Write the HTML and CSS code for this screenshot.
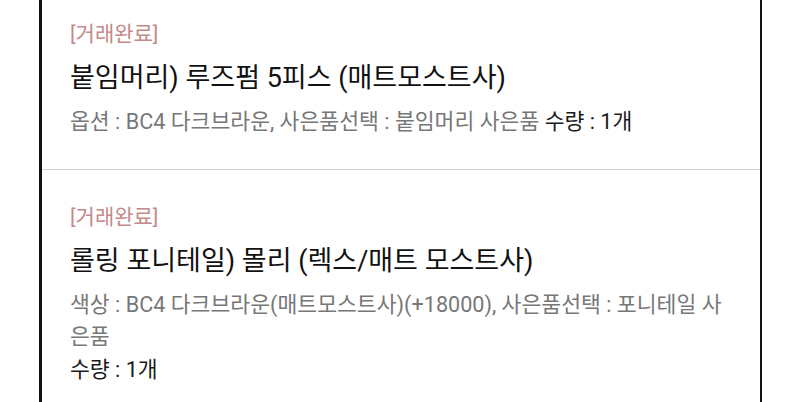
FILE: index.html
```html
<!DOCTYPE html>
<html lang="ko">
<head>
<meta charset="utf-8">
<link rel="stylesheet" href="styles.css">
</head>
<body>
<div class="list">
  <div class="item">
    <div class="status">[거래완료]</div>
    <div class="title">붙임머리) 루즈펌 5피스 (매트모스트사)</div>
    <div class="info"><span class="opt">옵션 : BC4 다크브라운, 사은품선택 : 붙임머리 사은품</span> <span class="qty">수량 : 1개</span></div>
  </div>
  <div class="item">
    <div class="status">[거래완료]</div>
    <div class="title">롤링 포니테일) 몰리 (렉스/매트 모스트사)</div>
    <div class="info"><span class="opt">색상 : BC4 다크브라운(매트모스트사)(+18000), 사은품선택 : 포니테일 사은품</span> <span class="qty">수량 : 1개</span></div>
  </div>
</div>
</body>
</html>
```

FILE: styles.css
```css
html, body {
  margin: 0;
  padding: 0;
  background: #fff;
  height: 402px;
  overflow: hidden;
}
body {
  font-family: "Roboto", "Noto Sans CJK KR", sans-serif;
}
.list {
  margin: -13px 38px 0 39px;
  border-left: 3px solid #111;
  border-right: 2px solid #111;
  min-height: 430px;
}
.item {
  padding: 31px 30px 31px 28px;
  border-bottom: 1px solid #d0d0d0;
}
.status {
  font-size: 21px;
  line-height: 32px;
  color: #c48a8a;
  margin-bottom: 10px;
}
.title {
  font-size: 27px;
  line-height: 37px;
  color: #111;
}
.info {
  margin-top: 8.5px;
  font-size: 21.6px;
  line-height: 32.5px;
}
.opt {
  display: inline-block;
  color: #777;
}
.qty {
  color: #1a1a1a;
}
```
